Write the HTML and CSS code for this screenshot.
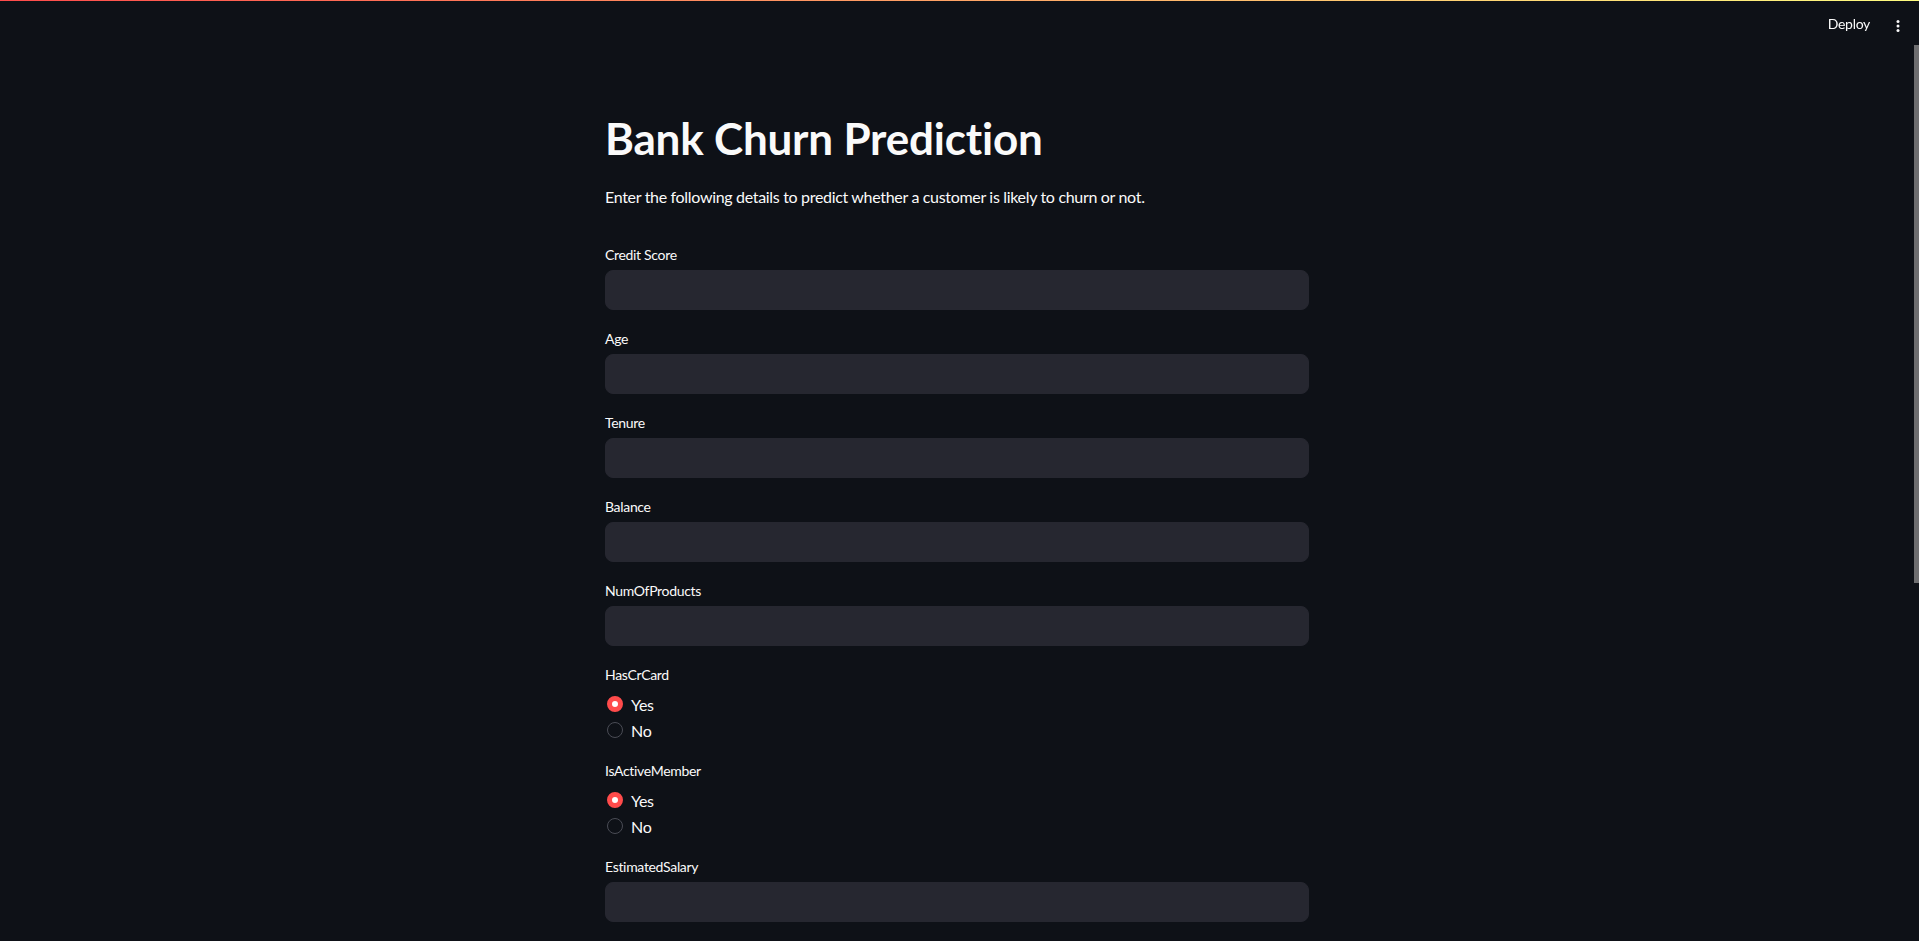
FILE: index.html
```html
<!DOCTYPE html>
<html lang="en">
<head>
<meta charset="utf-8">
<title>Bank Churn Prediction</title>
<link rel="stylesheet" href="styles.css">
</head>
<body>
<div class="decoration"></div>
<header class="header">
  <div class="toolbar">
    <button class="deploy" type="button">Deploy</button>
    <button class="menu" type="button" aria-label="Main menu">
      <svg width="18" height="18" viewBox="0 0 18 18"><circle cx="9" cy="4.5" r="1.5" fill="#fafafa"/><circle cx="9" cy="9" r="1.5" fill="#fafafa"/><circle cx="9" cy="13.5" r="1.5" fill="#fafafa"/></svg>
    </button>
  </div>
</header>
<div class="app">
  <main class="block">
    <h1 class="title">Bank Churn Prediction</h1>
    <p class="intro">Enter the following details to predict whether a customer is likely to churn or not.</p>

    <div class="field first">
      <label class="label">Credit Score</label>
      <input class="input" type="text">
    </div>
    <div class="field">
      <label class="label">Age</label>
      <input class="input" type="text">
    </div>
    <div class="field">
      <label class="label">Tenure</label>
      <input class="input" type="text">
    </div>
    <div class="field">
      <label class="label">Balance</label>
      <input class="input" type="text">
    </div>
    <div class="field">
      <label class="label">NumOfProducts</label>
      <input class="input" type="text">
    </div>
    <div class="field">
      <div class="label">HasCrCard</div>
      <div class="radios">
        <div class="opt"><span class="dot on"></span><span>Yes</span></div>
        <div class="opt"><span class="dot"></span><span>No</span></div>
      </div>
    </div>
    <div class="field">
      <div class="label">IsActiveMember</div>
      <div class="radios">
        <div class="opt"><span class="dot on"></span><span>Yes</span></div>
        <div class="opt"><span class="dot"></span><span>No</span></div>
      </div>
    </div>
    <div class="field">
      <label class="label">EstimatedSalary</label>
      <input class="input" type="text">
    </div>
  </main>
</div>
<div class="scrollbar"><div class="thumb"></div></div>
</body>
</html>
```
FILE: styles.css
```css
html, body {
  margin: 0;
  padding: 0;
  height: 100%;
  overflow: hidden;
  background: #0e1117;
  color: #fafafa;
  font-family: "Lato", "Noto Sans", sans-serif;
}

body {
  display: flex;
}

.decoration {
  position: fixed;
  top: 0;
  left: 0;
  right: 0;
  height: 1px;
  background: linear-gradient(90deg, #ff4b4b, #fffd80);
  z-index: 3;
}

.header {
  position: fixed;
  top: 0;
  left: 0;
  right: 0;
  height: 48px;
  display: flex;
  justify-content: flex-end;
  align-items: center;
  z-index: 2;
  pointer-events: none;
}

.toolbar {
  display: flex;
  align-items: center;
  gap: 19px;
  padding-right: 12px;
}

.deploy {
  background: none;
  border: 0;
  padding: 0;
  color: #fafafa;
  font: 14px "Lato", "Noto Sans", sans-serif;
  letter-spacing: -0.3px;
  margin-top: -1px;
}

.menu {
  background: none;
  border: 0;
  padding: 0;
  width: 18px;
  height: 18px;
  display: flex;
  margin-top: 3px;
}

.app {
  flex: 1;
  height: 100vh;
  overflow-y: auto;
  scrollbar-width: none;
}

.scrollbar {
  width: 5px;
  flex: none;
  padding-top: 45px;
}

.thumb {
  height: 538px;
  background: #6e6e70;
}

.block {
  width: 704px;
  margin: 0 auto;
  padding: 112px 0 645px;
  letter-spacing: -0.02em;
}

.title {
  margin: 0;
  font-size: 44px;
  line-height: 53px;
  font-weight: 700;
  letter-spacing: -0.2px;
  color: #fafafa;
}

.intro {
  margin: 19px 0 0;
  font-size: 16px;
  line-height: 26px;
}

.field {
  margin-top: 16px;
}

.field.first {
  margin-top: 32px;
}

.label {
  display: flex;
  align-items: center;
  height: 24px;
  margin-bottom: 4px;
  font-size: 14px;
  color: #fafafa;
}

.input {
  display: block;
  width: 100%;
  height: 40px;
  box-sizing: border-box;
  background: #262730;
  border: 1px solid #262730;
  border-radius: 8px;
  outline: none;
  color: #fafafa;
  padding: 0 12px;
}

.radios {
  display: flex;
  flex-direction: column;
  gap: 2px;
  padding-top: 2px;
}

.opt {
  display: flex;
  align-items: center;
  gap: 8px;
  height: 24px;
  padding-left: 2px;
  font-size: 16px;
}

.dot {
  width: 16px;
  height: 16px;
  box-sizing: border-box;
  border-radius: 50%;
  border: 1px solid #4a4c55;
  background: #0e1117;
}

.dot.on {
  border: 5px solid #ff4b4b;
  background: #ffffff;
}
```
